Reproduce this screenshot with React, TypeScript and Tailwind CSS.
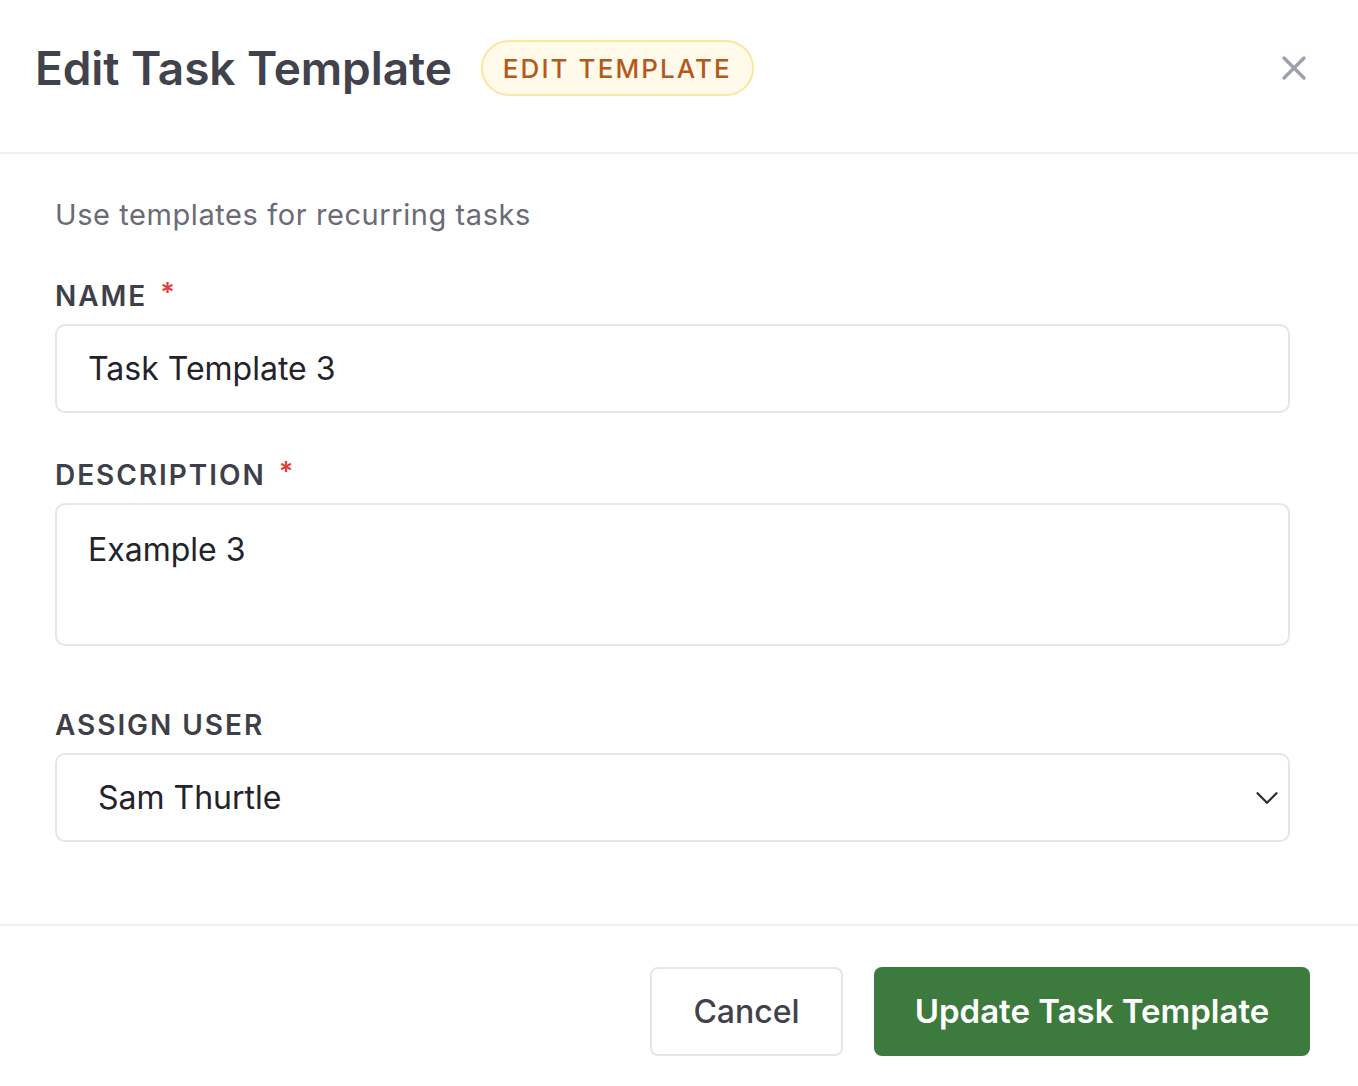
import { X, ChevronDown } from 'lucide-react';

const FONT = { fontFamily: 'Inter, "Noto Sans", sans-serif' };

function Label({ text, required }: { text: string; required?: boolean }) {
  return (
    <div className="flex items-center gap-[13px] text-[28px] font-semibold tracking-[0.07em] text-[#3f3f4a] leading-none">
      <span>{text}</span>
      {required && <span className="text-[#e0403a] text-[27px] -mt-2">*</span>}
    </div>
  );
}

export default function App() {
  return (
    <div className="w-[1358px] h-[1086px] bg-white flex flex-col" style={FONT}>
      <div className="h-[154px] flex items-center justify-between pl-[35px] pr-[44px] border-b-2 border-[#f0f0f2] pb-[16px]">
        <div className="flex items-center gap-[29px]">
          <h1 className="text-[46px] font-semibold text-[#42424d] tracking-[-0.002em]">Edit Task Template</h1>
          <span className="h-[56px] px-[20px] flex items-center rounded-full bg-[#fffaea] border-2 border-[#fbe6a0] text-[26px] text-[#b4591c] tracking-[0.08em] font-medium">
            EDIT TEMPLATE
          </span>
        </div>
        <X className="w-[40px] h-[40px] text-[#9ca0ab]" strokeWidth={2} />
      </div>

      <div className="px-[55px] pt-[46px] flex flex-col">
        <p className="text-[29px] text-[#6b6b78] leading-none tracking-[0.02em]">Use templates for recurring tasks</p>

        <div className="mt-[53px]">
          <Label text="NAME" required />
        </div>
        <div className="mt-[14px] h-[89px] w-[1235px] border-2 border-[#e6e6e9] rounded-[10px] flex items-center pl-[31px] text-[32px] text-[#232329]">
          Task Template 3
        </div>

        <div className="mt-[48px]">
          <Label text="DESCRIPTION" required />
        </div>
        <div className="mt-[14px] h-[143px] w-[1235px] border-2 border-[#e6e6e9] rounded-[10px] pl-[31px] pt-[29px] text-[32px] text-[#232329] leading-none">
          Example 3
        </div>

        <div className="mt-[65px]">
          <Label text="ASSIGN USER" />
        </div>
        <div className="mt-[14px] h-[89px] w-[1235px] border-2 border-[#e6e6e9] rounded-[10px] flex items-center justify-between pl-[41px] pr-[2px] text-[32px] text-[#232329]">
          <span>Sam Thurtle</span>
          <ChevronDown className="w-[38px] h-[38px] text-[#2a2a30]" strokeWidth={1.4} />
        </div>
      </div>

      <div className="mt-[82px] border-t-2 border-[#f0f0f2] flex justify-end gap-[31px] pr-[48px] pt-[41px]">
        <button className="h-[89px] w-[193px] rounded-[8px] border-2 border-[#e6e6e9] text-[32px] text-[#42424d] font-medium">
          Cancel
        </button>
        <button className="h-[89px] w-[436px] rounded-[8px] bg-[#3c7a3e] text-[33px] text-white font-semibold">
          Update Task Template
        </button>
      </div>
    </div>
  );
}
